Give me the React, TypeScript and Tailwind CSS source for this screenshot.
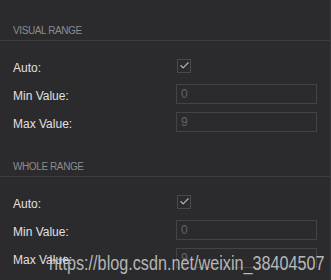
import { Check } from "lucide-react";

function Row({ label, children }: { label: string; children: React.ReactNode }) {
  return (
    <div className="grid h-5 grid-cols-[163px_141px] items-center">
      <span className="mt-[5px] text-[12px] text-[#e0e0e0]">{label}</span>
      {children}
    </div>
  );
}

function Field({ value }: { value: string }) {
  return (
    <div className="flex h-5 items-center border border-[#444447] pl-[4px] text-[12px] text-[#5e636b]">
      {value}
    </div>
  );
}

function Section({ title, className }: { title: string; className?: string }) {
  return (
    <div className={className}>
      <div className="border-b border-[#3c3c3f] pb-[3px] pl-[13px] text-[10px] leading-[12px] tracking-[-0.4px] text-[#8c8c8c]">
        {title}
      </div>
      <div className="mt-[13px] flex flex-col gap-2 pl-[13px]">
        <Row label="Auto:">
          <div className="ml-[1px] flex h-[14px] w-[14px] items-center justify-center border border-[#4a4a4c]">
            <Check className="h-[11px] w-[11px] text-[#b8b8b8]" strokeWidth={2.5} />
          </div>
        </Row>
        <Row label="Min Value:">
          <Field value="0" />
        </Row>
        <Row label="Max Value:">
          <Field value="9" />
        </Row>
      </div>
    </div>
  );
}

export default function App() {
  return (
    <div className="relative h-[280px] w-[331px] overflow-hidden border-r border-[#38383a] bg-[#2b2b2d] pt-[25px] font-['Liberation_Sans',Arial,sans-serif]">
      <Section title="VISUAL RANGE" />
      <Section title="WHOLE RANGE" className="mt-[31px]" />
      <div className="absolute left-[49px] top-[248px] origin-left scale-x-[0.81] whitespace-nowrap text-[20px] text-[#d2d2d2]/85">
        https://blog.csdn.net/weixin_38404507
      </div>
    </div>
  );
}
